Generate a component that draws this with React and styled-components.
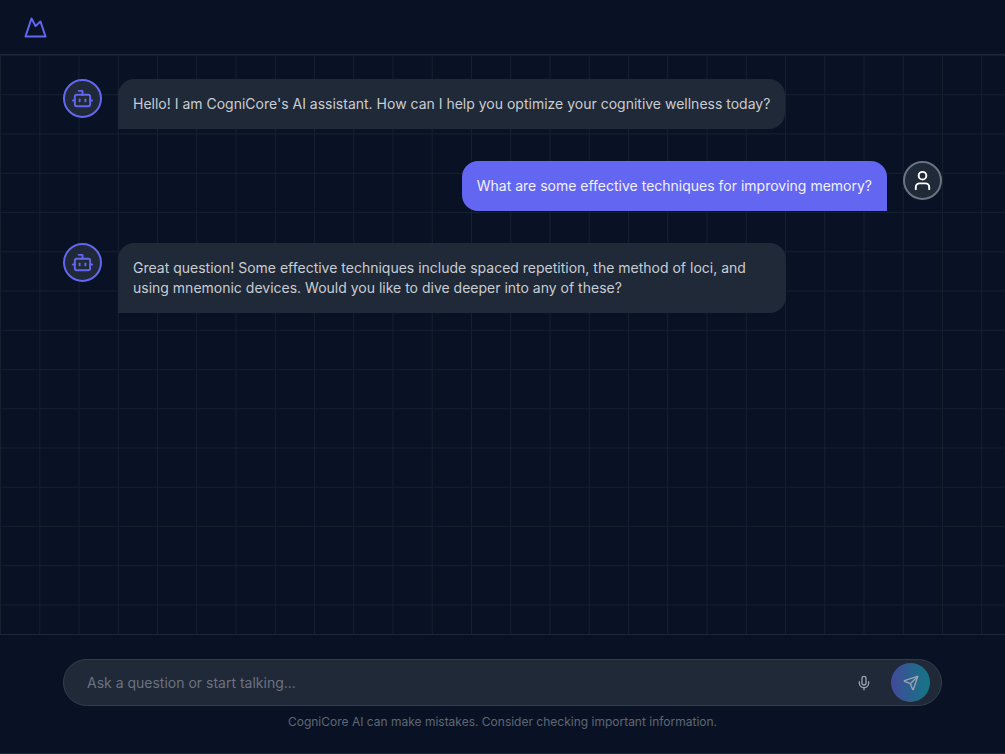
import { useState } from "react";
import styled, { createGlobalStyle } from "styled-components";
import { Bot, Mic, Send, User } from "lucide-react";

const GlobalStyle = createGlobalStyle`
  * {
    box-sizing: border-box;
  }
  body {
    margin: 0;
    background: #091224;
    font-family: "Inter", sans-serif;
  }
`;

const Page = styled.div`
  display: flex;
  flex-direction: column;
  height: 100vh;
  color: #c9cdd3;
  background: #091224;
  border-bottom: 1px solid #1f2836;
`;

const Header = styled.header`
  display: flex;
  align-items: center;
  flex-shrink: 0;
  height: 55px;
  padding: 0 24px;
  border-bottom: 1px solid #1f2836;
`;

const HomeLink = styled.a`
  display: flex;
  color: #6366f1;
`;

const Messages = styled.main`
  --cell: calc(100vw / 25.6);
  flex: 1;
  min-height: 0;
  overflow-y: auto;
  padding: 24px;
  background-image: linear-gradient(to right, #151f2e 1px, transparent 1px),
    linear-gradient(to bottom, #151f2e 1px, transparent 1px);
  background-size: var(--cell) var(--cell);
`;

const Column = styled.div`
  display: flex;
  flex-direction: column;
  gap: ${(props) => props.$gap};
  width: 100%;
  max-width: 879px;
  margin: 0 auto;
`;

const MessageRow = styled.div`
  display: flex;
  align-items: flex-start;
  gap: 16px;
  justify-content: ${(props) => (props.$mine ? "flex-end" : "flex-start")};
`;

const Avatar = styled.div`
  display: flex;
  align-items: center;
  justify-content: center;
  flex-shrink: 0;
  width: 39px;
  height: 39px;
  border-radius: 50%;
  border: 2px solid ${(props) => (props.$mine ? "#6b7280" : "#6366f1")};
  background: #1f2937;
  color: ${(props) => (props.$mine ? "#ffffff" : "#6366f1")};
`;

const Bubble = styled.p`
  max-width: 76%;
  margin: 0;
  padding: 15px;
  border-radius: ${(props) => (props.$mine ? "16px 16px 0 16px" : "16px 16px 16px 0")};
  background: ${(props) => (props.$mine ? "#6366f1" : "#202937")};
  color: ${(props) => (props.$mine ? "#f1f1fe" : "#c9cdd3")};
  font-size: 14px;
  line-height: 20px;
`;

const Footer = styled.footer`
  flex-shrink: 0;
  padding: 24px 24px 23px;
  border-top: 1px solid #1f2836;
`;

const AskForm = styled.form`
  display: flex;
  align-items: center;
  gap: 15px;
  height: 47px;
  padding: 0 11px 0 23px;
  border: 1px solid #343d4b;
  border-radius: 24px;
  background: #202937;
`;

const AskInput = styled.input`
  flex: 1;
  min-width: 0;
  padding: 0;
  border: none;
  outline: none;
  background: transparent;
  color: #c9cdd3;
  font-family: inherit;
  font-size: 14px;
  &::placeholder {
    color: #6b7280;
    opacity: 1;
  }
`;

const IconButton = styled.button`
  display: flex;
  align-items: center;
  justify-content: center;
  width: 24px;
  height: 24px;
  padding: 0;
  border: none;
  background: transparent;
  color: #9ca3af;
  cursor: pointer;
`;

const SendButton = styled(IconButton)`
  width: 39px;
  height: 39px;
  border-radius: 50%;
  background: linear-gradient(to right, #434999, #137785);
`;

const Note = styled.p`
  margin: 0;
  text-align: center;
  color: #5f6775;
  font-size: 12px;
  line-height: 16px;
`;

const Logo = () => (
  <svg
    width="24"
    height="24"
    viewBox="0 0 24 24"
    fill="none"
    stroke="currentColor"
    strokeWidth="2"
    strokeLinejoin="round"
  >
    <path d="M1.5 21.5 L7.5 3.5 L11.5 11 L16.5 6.5 L21.5 21.5 Z" />
  </svg>
);

const messages = [
  {
    id: 1,
    text: "Hello! I am CogniCore's AI assistant. How can I help you optimize your cognitive wellness today?",
  },
  {
    id: 2,
    mine: true,
    text: "What are some effective techniques for improving memory?",
  },
  {
    id: 3,
    text: "Great question! Some effective techniques include spaced repetition, the method of loci, and using mnemonic devices. Would you like to dive deeper into any of these?",
  },
];

const Message = ({ mine, text }) => (
  <MessageRow $mine={mine}>
    {!mine && (
      <Avatar>
        <Bot size={23} />
      </Avatar>
    )}
    <Bubble $mine={mine}>{text}</Bubble>
    {mine && (
      <Avatar $mine>
        <User size={23} />
      </Avatar>
    )}
  </MessageRow>
);

export default function App() {
  const [question, setQuestion] = useState("");
  return (
    <Page>
      <GlobalStyle />
      <Header>
        <HomeLink href="#" aria-label="CogniCore home">
          <Logo />
        </HomeLink>
      </Header>
      <Messages>
        <Column $gap="32px">
          {messages.map((message) => (
            <Message key={message.id} mine={message.mine} text={message.text} />
          ))}
        </Column>
      </Messages>
      <Footer>
        <Column $gap="8px">
          <AskForm onSubmit={(e) => e.preventDefault()}>
            <AskInput
              type="text"
              aria-label="Ask a question"
              placeholder="Ask a question or start talking..."
              value={question}
              onChange={(e) => setQuestion(e.target.value)}
            />
            <IconButton type="button" aria-label="Start talking">
              <Mic size={16} />
            </IconButton>
            <SendButton type="submit" aria-label="Send">
              <Send size={16} />
            </SendButton>
          </AskForm>
          <Note>CogniCore AI can make mistakes. Consider checking important information.</Note>
        </Column>
      </Footer>
    </Page>
  );
}
